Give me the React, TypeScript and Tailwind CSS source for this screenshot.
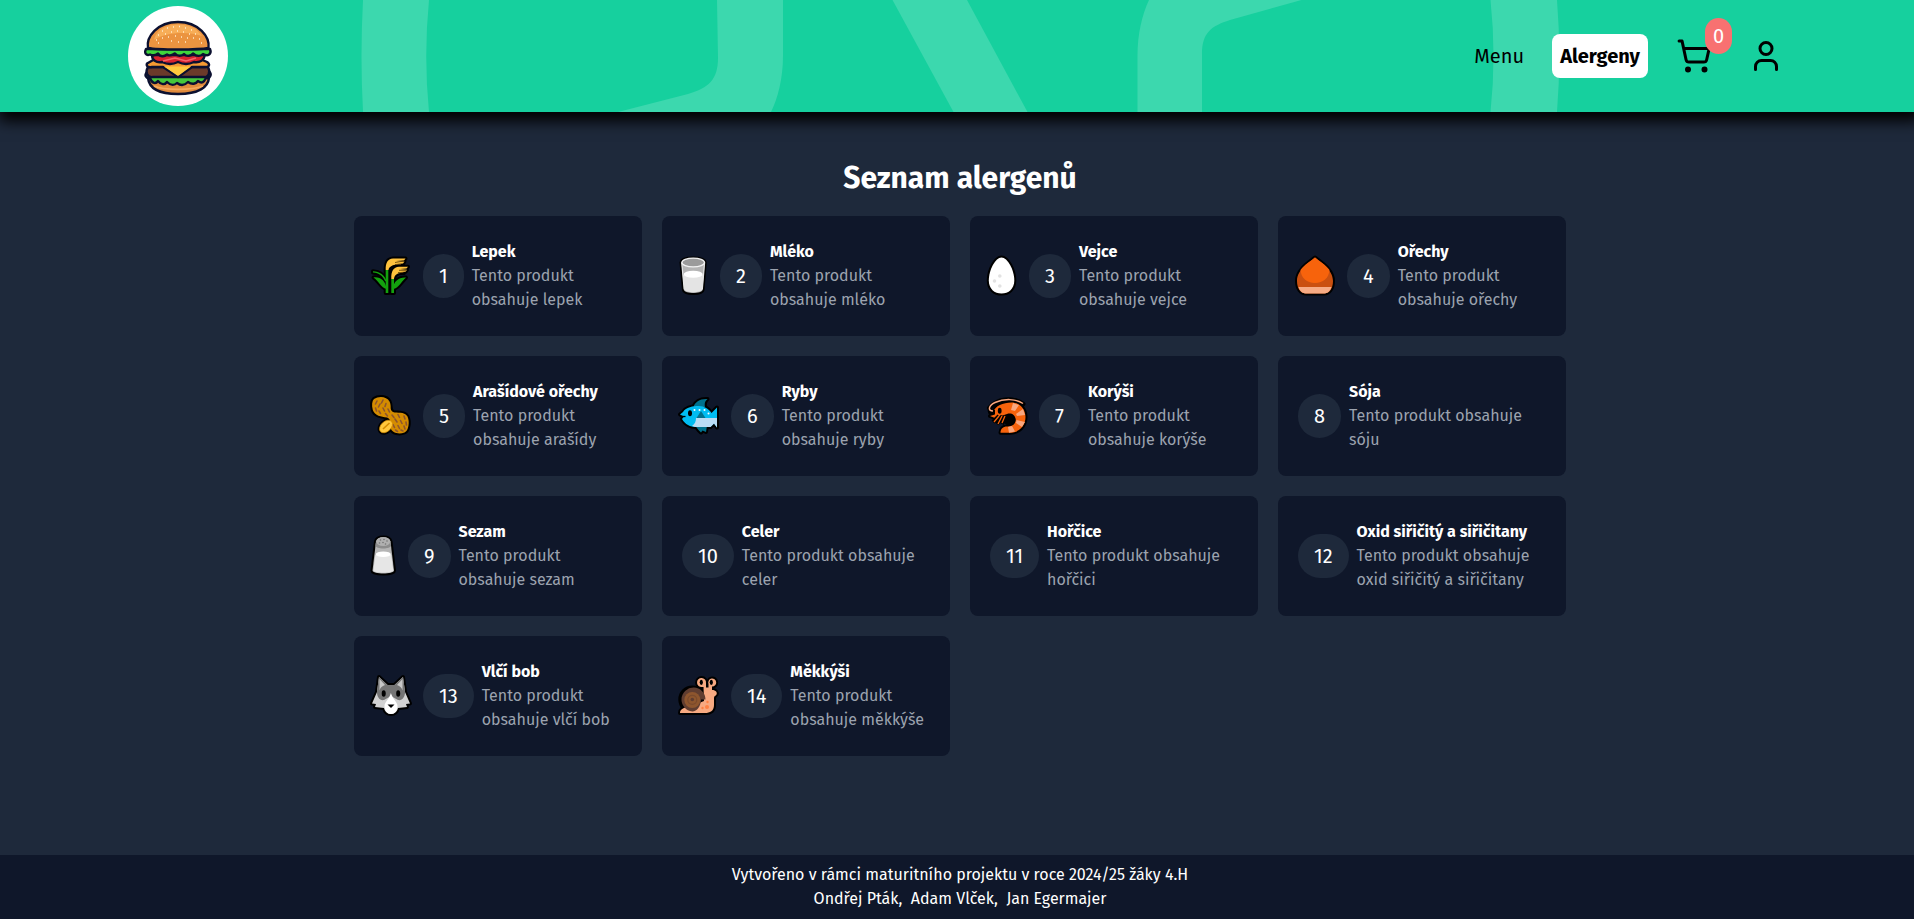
import type { ReactNode } from "react";
import { ShoppingCart, User } from "lucide-react";

type Allergen = {
  id: number;
  name: string;
  text: [string, string];
  icon?: ReactNode;
};

function Icon({ w, inset = 0, shape, children }: { w: number; inset?: number; shape: ReactNode; children?: ReactNode }) {
  return (
    <svg width={w} height="40" viewBox={`${-inset} 0 ${w} 40`} className="mr-2 shrink-0 overflow-visible">
      <g stroke="#000" strokeWidth="4" strokeLinejoin="round" strokeLinecap="round" fill="#000">
        {shape}
      </g>
      {children}
    </svg>
  );
}

const wheatHeads = (
  <>
    <path d="M15.700 14C15.500 7 17.500 3 23 2.500H35.500L34 4.500L26 5L34.500 5.500L33 7.500L26 8L30 9C24 8 19 10 18.500 14Z" />
    <path d="M21.300 23C21 15 23.500 11 29 10.700H38L36.500 12.500L30 13L37 13.700L35.500 15.700L30 16L34 17C28 16.500 24.500 18 24 23Z" />
  </>
);
const wheatLeaves = (
  <>
    <path d="M15.700 14H18.300V37H15.700ZM21.300 23H24V37H21.300Z" />
    <path d="M3.500 21.500C10 20.500 16 25 16.500 33C11 32 9 25 3.500 21.500ZM36 21.500C29 21 23.500 25 23 33C29 32 31 26 36 21.500Z" />
    <path d="M3 15.300C10 15.500 14.500 19 17 26L15 25C12.500 19.500 9 17 3 16.500Z" />
  </>
);
const peanutShape = (
  <path d="M4 3C9 -0.500 17 0.500 19.500 5.500C22 10.500 19 13.500 23 16C27 17.500 34 15 37.500 20.500C40 26 38.500 35 34.500 36.500C29 38.500 22.500 37 21 33C20 27 21.500 23.500 17 21.500C11 20.500 5 20 2.800 14C1.500 9 2 5 4 3Z" />
);
const smallPeanut = <ellipse cx="16" cy="30.500" rx="7.500" ry="5" transform="rotate(-42 16 30.500)" />;
const glassShape = <path d="M2.500 6.500C3 1 25 1 25.700 6.500L23.500 34C23 38 5.500 38 5 34Z" />;
const fishBody = (
  <path d="M1 18.500L4 16C7 11 14 10 20 10C25 10 30 13 32.500 17L38 11.500V31.500L35 27.500L31.500 31H19C12 31.500 6.500 29 3 23L5 20.500Z" />
);
const fishFins = (
  <path d="M14.500 11C16 6 21 2.500 28.500 3C25.500 5.500 25.500 8 26 11ZM16 29.500H28L27 36L23.500 34.500L22 36.500L19.500 34Z" />
);
const eggShape = (
  <path d="M14.500 1.500C20.500 1.500 27.300 14 27.300 24.500C27.300 33 21.500 37.500 14.500 37.500C7.500 37.500 1.800 33 1.800 24.500C1.800 14 8.500 1.500 14.500 1.500Z" />
);
const nutShape = <path d="M20 1.500C25 6 38 13 38 25C38 33 34 37.500 29 37.500H11C6 37.500 2 33 2 25C2 13 15 6 20 1.500Z" />;
const shrimpShape = (
  <path d="M6.500 16C8 10 16 6.500 24.500 6.500C33 6.500 38.500 13 38.500 21C38.500 30 32 36.700 23 36.700H13.500C13.500 33 16 30.500 20 30.500C26 31 29 27 28.500 23C28 18.500 24 16.500 20 18L8 22L3 20L8 18.500Z" />
);
const shakerShape = <path d="M5 5.500C6 0 18.500 0 19.500 5.500L23 34.500C23 38.500 1.500 38.500 1.500 34.500Z" />;
const wolfShape = (
  <path d="M9 1L17.500 9H24.500L33 1L35 16L40 27.500L36 28L37 31L28 32C27 36 24 38 21 38C18 38 15 36 14 32L5 31L6 28L2 27.500L7 16Z" />
);
const snailBody = (
  <path d="M1 37C1 33 5 31.500 10 31L25 25L24.500 11H23A4.500 4.500 0 1 1 27 7V11.500H29.500V8A4 4 0 1 1 33 10.500V14C37 14 38.500 16.500 37.500 18.500C36.500 20 35 20 35 22V29C35 35 31 37 26 37Z" />
);

const icons = {
  wheat: (
    <Icon w={41} shape={<>{wheatHeads}{wheatLeaves}</>}>
      <g fill="#ffc23d">{wheatHeads}</g>
      <g fill="#13a10e">{wheatLeaves}</g>
      <path d="M25 6.500L34 5M25 8.500H31M29 14.300H36M28 16.500H33" stroke="#5c3b05" strokeWidth=".8" />
    </Icon>
  ),
  peanut: (
    <Icon w={41} shape={<>{peanutShape}{smallPeanut}</>}>
      <g fill="#d48c00">{peanutShape}</g>
      <path
        d="M7 5l-1.500 3M13 4l-1.500 3M10 8l-1.500 3M16 7.500l-1 3M5.500 12l1 3M13 12l1.500 3M9 15l1.500 2.500M18 13l1.500 3M15.500 17.500l2 2.500M22 19l2 2.500M28 18.500l1.500 3M34 20l1 3M25 23l2 3M30.500 24.500l1.500 3M36 26l.5 3M23 28.500l1.500 3M28 29.500l1.500 3M34 30l1 3M25.500 34l2 1.500M31 34l2 1"
        stroke="#8e562e"
        strokeWidth="1.600"
        strokeLinecap="round"
      />
      <g stroke="#d48c00" strokeWidth=".7" fill="#ffc83d">{smallPeanut}</g>
      <path d="M13 33L19.500 27" stroke="#d48c00" strokeWidth="1.600" />
    </Icon>
  ),
  milk: (
    <Icon w={30} inset={1} shape={glassShape}>
      <g fill="#b4b4b4">{glassShape}</g>
      <path d="M4 19L5.300 33.500C6 37 22.500 37 23.200 33.500L24.500 19Z" fill="#e4e4e4" />
      <path d="M2.700 6.500L5.200 33.500M25.600 6.500L23.300 33.500" stroke="#e6e6e6" strokeWidth="1.200" />
      <ellipse cx="14.200" cy="18.300" rx="9.600" ry="3.500" fill="#fff" />
      <ellipse cx="14.200" cy="6.500" rx="11.300" ry="4.400" fill="#9b9b9b" stroke="#f2f2f2" strokeWidth="1.300" />
    </Icon>
  ),
  fish: (
    <Icon w={41} inset={1} shape={<>{fishBody}{fishFins}</>}>
      <g fill="#00728f">{fishFins}</g>
      <g fill="#00bcf2">{fishBody}</g>
      <path d="M17 22H38V31.500L35 27.500L31.500 31H18C16 31 14.500 30.500 13 30C16 28 17 25 17 22Z" fill="#b9dcf5" />
      <path d="M17.500 22L22 15L26.500 22Z" fill="#00728f" />
      <ellipse cx="11" cy="17.300" rx="2" ry="3" fill="#000" />
      <path d="M2 20.500H6.500" stroke="#000" strokeWidth="1.300" />
      <g fill="#fff">
        <circle cx="15.500" cy="14" r="1" />
        <circle cx="20.500" cy="14" r="1" />
        <circle cx="25.500" cy="14" r="1" />
        <circle cx="29.500" cy="17.500" r="1" />
      </g>
    </Icon>
  ),
  egg: (
    <Icon w={31} inset={1} shape={eggShape}>
      <g fill="#fff">{eggShape}</g>
      <g fill="#e2e2e2">
        <circle cx="12.800" cy="20" r="1.800" />
        <circle cx="7.500" cy="25" r="1.800" />
        <circle cx="12.800" cy="30" r="1.800" />
      </g>
    </Icon>
  ),
  nut: (
    <Icon w={41} inset={1} shape={nutShape}>
      <g fill="#ca5010">{nutShape}</g>
      <path d="M3.500 31H36.500C35.300 35.500 32 37.500 29 37.500H11C8 37.500 4.700 35.500 3.500 31Z" fill="#f7ab84" />
      <path d="M20 1.500C24 5 30.500 8.500 34.500 14C34 22 28 27 20 27C12 27 6 22 5.500 14C9.500 8.500 16 5 20 1.500Z" fill="#f7630c" />
    </Icon>
  ),
  shrimp: (
    <Icon w={41} inset={1} shape={<>{shrimpShape}<path d="M2.500 12C10 3 25 1 36 8" fill="none" strokeWidth="5" /></>}>
      <g fill="#f7630c">{shrimpShape}</g>
      <path d="M26 7L32 9L28 15L24 14ZM36 13L38 19L30 20L29 18ZM38 26L35 31L29 27L29.500 24ZM28 35.500L22 36.700L21 31L25 30Z" fill="#f9a77f" />
      <path d="M8 16H3C1.500 12 6 8 12 5.500C20 2.500 30 3 36 8" fill="none" stroke="#000" strokeWidth="4" />
      <path d="M6 15C0.500 15 1.500 9.500 8 6.500C17 2.500 29 2.500 36 7.500" fill="none" stroke="#f9a77f" strokeWidth="1.500" />
      <ellipse cx="12.700" cy="14.800" rx="1.900" ry="3" fill="#000" />
      <ellipse cx="22.500" cy="24" rx="6" ry="5.500" fill="#000" />
      <path d="M12 20L6 26M15.500 20L10 28M19 20L15 28" stroke="#000" strokeWidth="4" />
      <path d="M12 20L7 26M15 20L11 28M18 20L15 27" stroke="#f7630c" strokeWidth="1.300" />
    </Icon>
  ),
  shaker: (
    <Icon w={26} inset={1} shape={shakerShape}>
      <g fill="#b5b5b5">{shakerShape}</g>
      <path d="M4.300 19L2.300 34.500C2.300 37.500 22.300 37.500 22.300 34.500L20.300 19Z" fill="#e6e6e6" />
      <ellipse cx="12.300" cy="18.300" rx="7.600" ry="2.800" fill="#fff" />
      <path d="M4.500 9.500C4.500 -1.500 20 -1.500 20 9.500C20 13.500 4.500 13.500 4.500 9.500Z" fill="#8c8c8c" />
      <ellipse cx="12.300" cy="5.500" rx="7" ry="4.500" fill="#b0b0b0" />
      <g fill="#737373">
        <circle cx="9.500" cy="4" r=".8" />
        <circle cx="13" cy="3.500" r=".8" />
        <circle cx="16" cy="5" r=".8" />
        <circle cx="8.500" cy="7" r=".8" />
        <circle cx="12" cy="6.500" r=".8" />
        <circle cx="14.500" cy="8" r=".8" />
      </g>
    </Icon>
  ),
  wolf: (
    <Icon w={41} shape={wolfShape}>
      <g fill="#d2d2d2">{wolfShape}</g>
      <path d="M9 1L17.500 9H24.500L33 1L35 15C35.500 21 32 25 28 24L21 20L14 24C10 25 6.500 21 7 15Z" fill="#757575" />
      <path d="M9.500 3L15 9C12 10 10 12 9.500 14.500ZM32.500 3L27 9C30 10 32 12 32.500 14.500Z" fill="#c8c8c8" />
      <path d="M20.900 17C22.500 23 27.500 26 27.500 30C27.500 35 24.500 38 21 38C17.500 38 14.500 35 14.500 30C14.500 26 19.500 23 20.900 17Z" fill="#fff" />
      <path d="M17.500 28.500H24.500L21 32Z" fill="#000" />
      <ellipse cx="13.700" cy="17.500" rx="2" ry="3.200" fill="#000" />
      <ellipse cx="28.200" cy="17.500" rx="2" ry="3.200" fill="#000" />
    </Icon>
  ),
  snail: (
    <Icon w={41} inset={1} shape={<>{snailBody}<circle cx="13.300" cy="23.500" r="12" /></>}>
      <g fill="#f7a981">{snailBody}</g>
      <path d="M13.300 35.500A12 12 0 1 1 26.500 23.500H22C22 30 18 35.500 13.300 35.500Z" fill="#603d30" />
      <circle cx="13.300" cy="24" r="8" fill="#8e562e" />
      <circle cx="13.300" cy="23.800" r="4.500" fill="none" stroke="#7a4a2c" strokeWidth="1.200" />
      <circle cx="13.300" cy="23.500" r="1.800" fill="#603d30" />
      <ellipse cx="22.300" cy="6.300" rx="1.600" ry="2.600" fill="#000" />
      <ellipse cx="32.300" cy="6.300" rx="1.600" ry="2.600" fill="#000" />
      <g fill="#ff8143">
        <circle cx="28" cy="31" r="2" />
        <circle cx="28.500" cy="26" r="1.200" />
        <circle cx="23.500" cy="32" r="1.200" />
      </g>
    </Icon>
  ),
};

const allergens: Allergen[] = [
  { id: 1, name: "Lepek", text: ["Tento produkt", "obsahuje lepek"], icon: icons.wheat },
  { id: 2, name: "Mléko", text: ["Tento produkt", "obsahuje mléko"], icon: icons.milk },
  { id: 3, name: "Vejce", text: ["Tento produkt", "obsahuje vejce"], icon: icons.egg },
  { id: 4, name: "Ořechy", text: ["Tento produkt", "obsahuje ořechy"], icon: icons.nut },
  { id: 5, name: "Arašídové ořechy", text: ["Tento produkt", "obsahuje arašídy"], icon: icons.peanut },
  { id: 6, name: "Ryby", text: ["Tento produkt", "obsahuje ryby"], icon: icons.fish },
  { id: 7, name: "Korýši", text: ["Tento produkt", "obsahuje korýše"], icon: icons.shrimp },
  { id: 8, name: "Sója", text: ["Tento produkt obsahuje", "sóju"] },
  { id: 9, name: "Sezam", text: ["Tento produkt", "obsahuje sezam"], icon: icons.shaker },
  { id: 10, name: "Celer", text: ["Tento produkt obsahuje", "celer"] },
  { id: 11, name: "Hořčice", text: ["Tento produkt obsahuje", "hořčici"] },
  { id: 12, name: "Oxid siřičitý a siřičitany", text: ["Tento produkt obsahuje", "oxid siřičitý a siřičitany"] },
  { id: 13, name: "Vlčí bob", text: ["Tento produkt", "obsahuje vlčí bob"], icon: icons.wolf },
  { id: 14, name: "Měkkýši", text: ["Tento produkt", "obsahuje měkkýše"], icon: icons.snail },
];

function Burger() {
  return (
    <svg width="100" height="100" viewBox="0 0 100 100">
      <g stroke="#0b1030" strokeWidth="2.400" strokeLinejoin="round">
        <path d="M20 72C21 81 29 88 50 88C71 88 80 81 81 72Z" fill="#e08a3c" />
        <path d="M19 66C16 69 18 73 22 72C24 78 28 78 30 75C33 79 37 79 39 76C43 80 47 79 49 77C53 80 57 79 60 76C64 79 68 78 70 75C74 78 76 76 78 72C83 72 84 68 81 65Z" fill="#45c83c" />
        <path d="M20 61H80C83 67 80 72 76 71H25C19 72 17 66 20 61Z" fill="#6b3a2a" />
        <path d="M27 53L19 57.500C18 60 20 62 24 61L35 61L50 71L64 61H77C82 61 82 58 79 56L72 53Z" fill="#f59a32" />
        <path d="M24 49H77C76 54 72 57 66 56C60 59 54 58 50 56C44 59 38 58 34 56C28 57 24 54 24 49Z" fill="#d8232f" />
        <path d="M18 43C16 47 18 50 22 48.500C25 50 28 49 30 47.500C33 52 37 50 39 48.500C42 51 45 48 47 47.500C50 51 54 50 56 48C59 51 63 50 65 47.500C69 51 73 50 75 48C80 51 84 48 82 43Z" fill="#3fd43c" />
        <path d="M20 42C18 31 29 16 50 16C71 16 82 31 80.500 42C70 44 30 44 20 42Z" fill="#eb9440" />
      </g>
      <path d="M26 34C28 24 38 18.500 50 18.500C60 18.500 69 22 74 30C60 25 37 26 26 34Z" fill="#f7ad57" />
      <path d="M36 60.500L50 70L63 60.500Z" fill="#ffc93e" />
      <path d="M35 55L47 52L58 55L68 52" fill="none" stroke="#f5636b" strokeWidth="1.500" />
      <path d="M26 80C36 84.500 64 84.500 75 80" fill="none" stroke="#f5ab5c" strokeWidth="1.600" />
      <path
        d="M34 25h1M39 22h1M45 21h1M51 20.500h1M57 22h1M63 24h1M30 29h1M37 28h1M43 26h1M49 25h1M55 26h1M61 28h1M67 28h1M28 34h1M34 32h1M40 31h1M47 30h1M53 31h1M59 32h1M65 32h1M71 33h1M43 35h1M50 36h1M57 36h1M73 37h1M30 37h1"
        stroke="#ffeccb"
        strokeWidth="1.300"
      />
    </svg>
  );
}

function Header() {
  return (
    <header className="relative flex h-28 items-center justify-between bg-[#16d09e] px-32 shadow-[0_8px_14px_1px_#000]">
      <svg className="absolute inset-0" width="1920" height="112" viewBox="0 0 1920 112" fill="#3cd8ae">
        <path d="M363 0H429Q423.500 56 429 112H363Q360 56 363 0Z" />
        <path d="M717 0H783V56C783 78 778 98 771 112H618L688 94C709 88 718 79 718 58Z" />
        <path d="M892.500 0H967L1027.500 112H953.500Z" />
        <path d="M1149 0H1301.500L1230 20C1211 26 1202 33 1202 54V112H1137.500V56C1137.500 34 1142 15 1149 0Z" />
        <path d="M1490.500 0H1557Q1561.500 56 1557 112H1490.500Q1496.500 56 1490.500 0Z" />
      </svg>
      <a href="#" className="relative flex size-[100px] rounded-full bg-white">
        <Burger />
      </a>
      <nav className="relative flex items-center text-xl leading-7 text-black">
        <a href="#" className="mr-7">Menu</a>
        <a href="#" className="mr-7 rounded-lg bg-white px-2 py-2 font-bold">
          Alergeny
        </a>
        <a href="#" className="relative mr-9 flex">
          <ShoppingCart size={36} />
          <span className="absolute -top-5 left-[29px] rounded-full bg-[#f87171] px-2 py-1 text-white">0</span>
        </a>
        <a href="#" className="mr-2 flex">
          <User size={36} />
        </a>
      </nav>
    </header>
  );
}

function Card({ item }: { item: Allergen }) {
  return (
    <li className="flex h-[120px] items-center rounded-lg bg-[#0f172a] pl-4">
      {item.icon}
      <span className="mr-2 ml-1 shrink-0 rounded-full bg-[#1e293b] px-4 py-2 text-xl leading-7 text-white">
        {item.id}
      </span>
      <div className="leading-6 whitespace-nowrap">
        <h2 className="font-bold text-white">{item.name}</h2>
        <p className="text-[#9ca3af]">
          {item.text[0]}
          <br />
          {item.text[1]}
        </p>
      </div>
    </li>
  );
}

export default function App() {
  return (
    <div className="h-[919px] w-full overflow-hidden bg-[#1e293b] font-['Fira_Sans','Noto_Sans',sans-serif] text-base">
      <div className="flex h-full w-[1920px] flex-col">
        <Header />
        <main className="flex flex-1 flex-col items-center pt-12">
          <h1 className="mb-5 text-3xl leading-9 font-bold text-white">Seznam alergenů</h1>
          <ul className="grid w-[1212px] grid-cols-4 gap-5">
            {allergens.map((item) => (
              <Card key={item.id} item={item} />
            ))}
          </ul>
        </main>
        <footer className="flex h-16 flex-col items-center bg-[#0f172a] pt-2 leading-6 text-white">
          <p>Vytvořeno v rámci maturitního projektu v roce 2024/25 žáky 4.H</p>
          <p className="whitespace-pre">Ondřej Pták,  Adam Vlček,  Jan Egermajer</p>
        </footer>
      </div>
    </div>
  );
}
